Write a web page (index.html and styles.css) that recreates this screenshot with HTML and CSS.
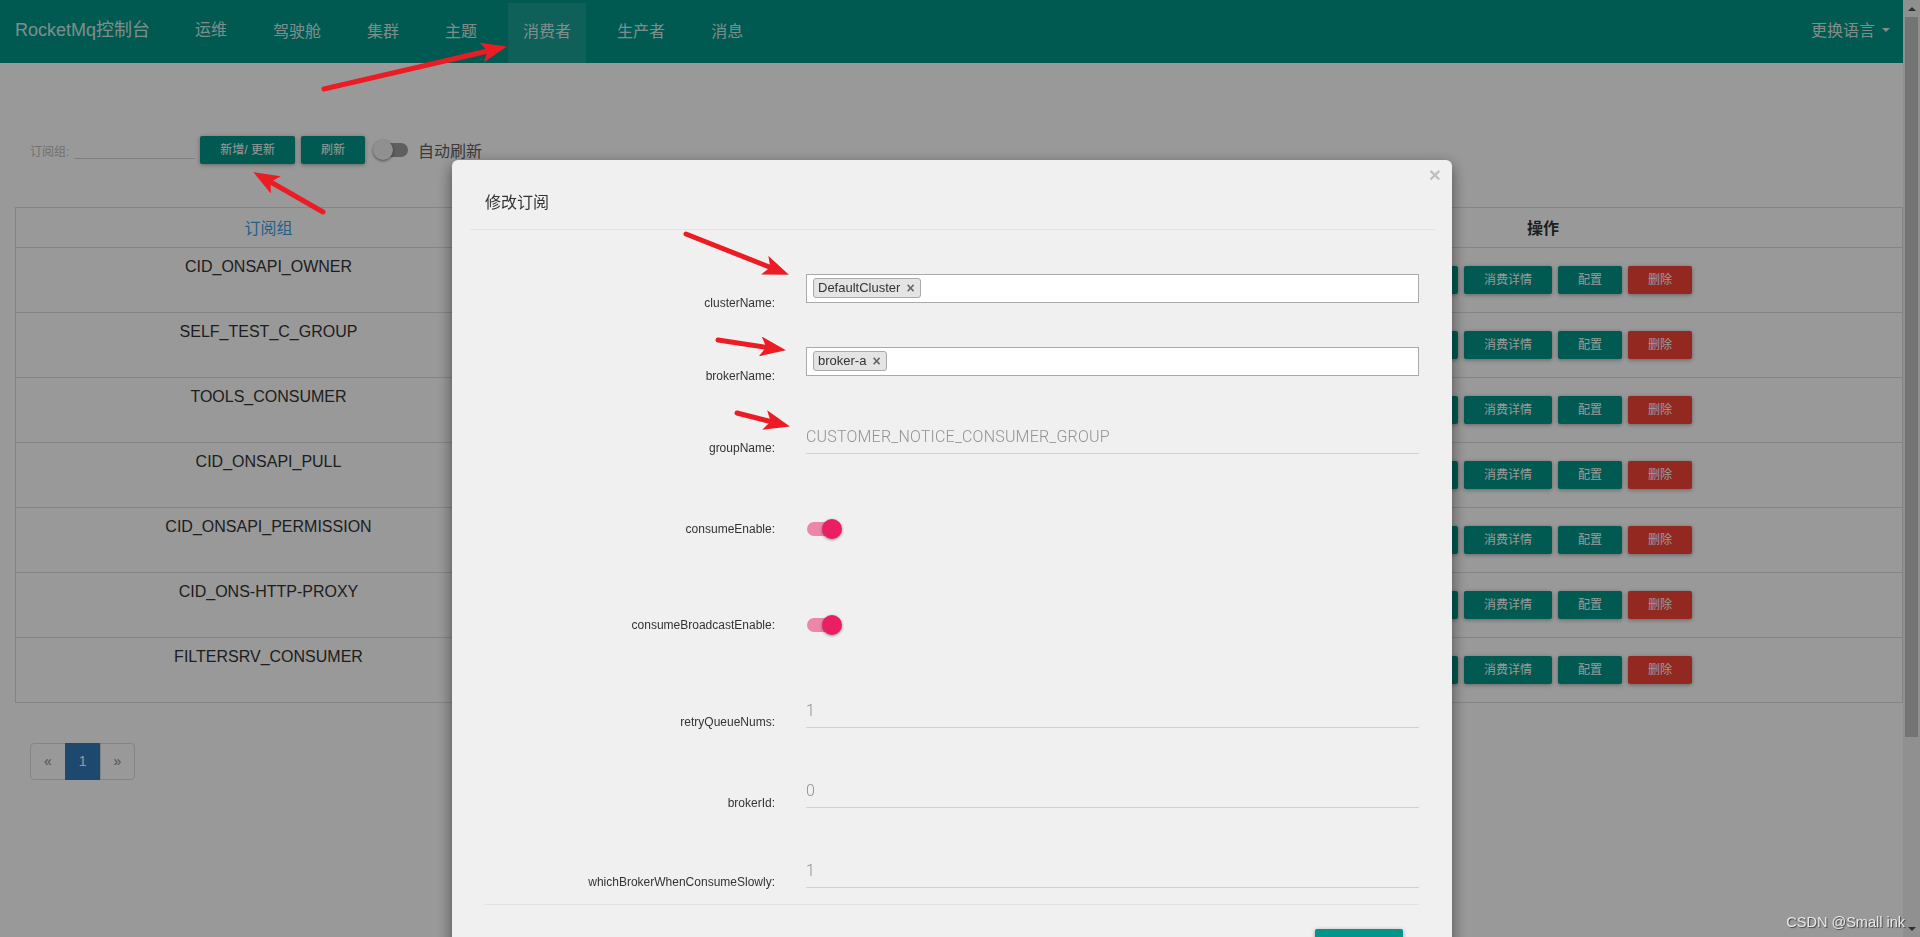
FILE: index.html
```html
<!DOCTYPE html>
<html lang="zh">
<head>
<meta charset="utf-8">
<title>RocketMq控制台</title>
<link rel="stylesheet" href="styles.css">
</head>
<body>
<div class="page">
  <div class="app">
    <nav class="navbar">
      <div class="brand">RocketMq控制台</div>
      <ul class="nav-list">
        <li class="nav-item nav-item-up">运维</li>
        <li class="nav-item">驾驶舱</li>
        <li class="nav-item">集群</li>
        <li class="nav-item">主题</li>
        <li class="nav-item active">消费者</li>
        <li class="nav-item">生产者</li>
        <li class="nav-item">消息</li>
      </ul>
      <div class="lang">更换语言<span class="caret"></span></div>
    </nav>
    <main class="content">
      <div class="filter">
        <span class="filter-label">订阅组:</span>
        <span class="filter-input"></span>
        <span class="btn btn-gap">新增/ 更新</span>
        <span class="btn btn-gap">刷新</span>
        <span class="switch"><span class="switch-track"></span><span class="switch-knob"></span></span>
        <span class="auto-label">自动刷新</span>
      </div>
      <div class="grid-table">
        <div class="tr thead">
          <div class="th th-link">订阅组</div>
          <div class="th">数量</div>
          <div class="th">版本</div>
          <div class="th">类型</div>
          <div class="th">模式</div>
          <div class="th">TPS</div>
          <div class="th">延迟</div>
          <div class="th th-bold">操作</div>
        </div>
        <div class="tr trow">
          <div class="td">CID_ONSAPI_OWNER</div><div class="td">0</div><div class="td"></div><div class="td"></div><div class="td"></div><div class="td">0</div><div class="td">0</div>
          <div class="td td-ops"><span class="btn">终端</span><span class="btn">消费详情</span><span class="btn">配置</span><span class="btn btn-red">删除</span></div>
        </div>
        <div class="tr trow">
          <div class="td">SELF_TEST_C_GROUP</div><div class="td">0</div><div class="td"></div><div class="td"></div><div class="td"></div><div class="td">0</div><div class="td">0</div>
          <div class="td td-ops"><span class="btn">终端</span><span class="btn">消费详情</span><span class="btn">配置</span><span class="btn btn-red">删除</span></div>
        </div>
        <div class="tr trow">
          <div class="td">TOOLS_CONSUMER</div><div class="td">0</div><div class="td"></div><div class="td"></div><div class="td"></div><div class="td">0</div><div class="td">0</div>
          <div class="td td-ops"><span class="btn">终端</span><span class="btn">消费详情</span><span class="btn">配置</span><span class="btn btn-red">删除</span></div>
        </div>
        <div class="tr trow">
          <div class="td">CID_ONSAPI_PULL</div><div class="td">0</div><div class="td"></div><div class="td"></div><div class="td"></div><div class="td">0</div><div class="td">0</div>
          <div class="td td-ops"><span class="btn">终端</span><span class="btn">消费详情</span><span class="btn">配置</span><span class="btn btn-red">删除</span></div>
        </div>
        <div class="tr trow">
          <div class="td">CID_ONSAPI_PERMISSION</div><div class="td">0</div><div class="td"></div><div class="td"></div><div class="td"></div><div class="td">0</div><div class="td">0</div>
          <div class="td td-ops"><span class="btn">终端</span><span class="btn">消费详情</span><span class="btn">配置</span><span class="btn btn-red">删除</span></div>
        </div>
        <div class="tr trow">
          <div class="td">CID_ONS-HTTP-PROXY</div><div class="td">0</div><div class="td"></div><div class="td"></div><div class="td"></div><div class="td">0</div><div class="td">0</div>
          <div class="td td-ops"><span class="btn">终端</span><span class="btn">消费详情</span><span class="btn">配置</span><span class="btn btn-red">删除</span></div>
        </div>
        <div class="tr trow">
          <div class="td">FILTERSRV_CONSUMER</div><div class="td">0</div><div class="td"></div><div class="td"></div><div class="td"></div><div class="td">0</div><div class="td">0</div>
          <div class="td td-ops"><span class="btn">终端</span><span class="btn">消费详情</span><span class="btn">配置</span><span class="btn btn-red">删除</span></div>
        </div>
      </div>
      <ul class="pagination">
        <li class="pg">«</li>
        <li class="pg pg-active">1</li>
        <li class="pg">»</li>
      </ul>
    </main>
  </div>
  <div class="scrollbar">
    <span class="sb-up"></span>
    <span class="sb-thumb"></span>
    <span class="sb-fill"></span>
    <span class="sb-down"></span>
  </div>
</div>

<div class="backdrop"></div>

<div class="modal">
  <span class="close">×</span>
  <div class="modal-header">
    <h4 class="modal-title">修改订阅</h4>
  </div>
  <div class="modal-body">
    <div class="form-row">
      <label class="form-label lb-box">clusterName:</label>
      <div class="control tagbox"><span class="tag">DefaultCluster<span class="tag-x">×</span></span></div>
    </div>
    <div class="form-row">
      <label class="form-label lb-box">brokerName:</label>
      <div class="control tagbox"><span class="tag">broker-a<span class="tag-x">×</span></span></div>
    </div>
    <div class="form-row">
      <label class="form-label lb-field">groupName:</label>
      <div class="control field">CUSTOMER_NOTICE_CONSUMER_GROUP</div>
    </div>
    <div class="form-row row-toggle row-ce">
      <label class="form-label">consumeEnable:</label>
      <div class="control"><span class="mswitch"><span class="mswitch-track"></span><span class="mswitch-knob"></span></span></div>
    </div>
    <div class="form-row row-toggle row-cbe">
      <label class="form-label">consumeBroadcastEnable:</label>
      <div class="control"><span class="mswitch"><span class="mswitch-track"></span><span class="mswitch-knob"></span></span></div>
    </div>
    <div class="form-row row-retry">
      <label class="form-label lb-field">retryQueueNums:</label>
      <div class="control field">1</div>
    </div>
    <div class="form-row row-num">
      <label class="form-label lb-field2">brokerId:</label>
      <div class="control field">0</div>
    </div>
    <div class="form-row row-num">
      <label class="form-label lb-field">whichBrokerWhenConsumeSlowly:</label>
      <div class="control field">1</div>
    </div>
  </div>
  <div class="modal-line"></div>
  <div class="modal-footer"><span class="btn btn-submit"></span></div>
</div>

<svg class="annotations" width="1920" height="937" viewBox="0 0 1920 937">
  <defs>
    <marker id="ah" markerWidth="26" markerHeight="20" refX="14" refY="10" orient="auto" markerUnits="userSpaceOnUse">
      <path d="M0,0 L26,10 L0,20 L6,10 Z" fill="#ec1c24"/>
    </marker>
  </defs>
  <g stroke="#ec1c24" stroke-width="5" stroke-linecap="round" fill="none">
    <line x1="324" y1="89" x2="495.3" y2="49.3" marker-end="url(#ah)"/>
    <line x1="323" y1="212" x2="263.7" y2="178" marker-end="url(#ah)"/>
    <line x1="686" y1="234" x2="777.7" y2="270.3" marker-end="url(#ah)"/>
    <line x1="718" y1="340" x2="774.1" y2="348.5" marker-end="url(#ah)"/>
    <line x1="737" y1="413" x2="778.3" y2="423.5" marker-end="url(#ah)"/>
  </g>
</svg>

<div class="watermark">CSDN @Small ink</div>
</body>
</html>
```

FILE: styles.css
```css
* { box-sizing: border-box; }

html, body {
  margin: 0;
  height: 937px;
  overflow: hidden;
}

body {
  font-family: "Liberation Sans", "Noto Sans CJK SC", sans-serif;
  background: #fff;
  color: #333;
}

.page {
  display: flex;
  height: 937px;
}

.app {
  flex: 1;
  min-width: 0;
}

/* navbar */
.navbar {
  display: flex;
  height: 63px;
  background: #009688;
  color: rgba(255, 255, 255, .84);
}

.brand {
  padding: 0 15px;
  font-size: 18px;
  line-height: 60px;
}

.nav-list {
  display: flex;
  gap: 16px;
  margin: 0 0 0 15px;
  padding: 0;
  list-style: none;
}

.nav-item {
  padding: 0 15px;
  font-size: 16px;
  line-height: 64px;
}

.nav-item-up { line-height: 60px; }

.nav-item.active {
  margin-top: 3px;
  line-height: 58px;
  height: 60px;
  background: rgba(255, 255, 255, .1);
}

.lang {
  display: flex;
  align-items: center;
  margin-left: auto;
  padding: 0 13px 0 15px;
  font-size: 16px;
  height: 58px;
}

.caret {
  width: 0;
  height: 0;
  margin-left: 7px;
  margin-top: 2px;
  border-left: 4px solid transparent;
  border-right: 4px solid transparent;
  border-top: 4px solid rgba(255, 255, 255, .84);
}

/* content */
.content {
  padding: 73px 0 0 15px;
}

.filter {
  display: flex;
  align-items: center;
  height: 28px;
  padding-left: 15px;
}

.filter-label {
  font-size: 12px;
  color: #bdbdbd;
  margin-right: 5px;
}

.filter-input {
  width: 121px;
  height: 17px;
  margin-right: 5px;
  border-bottom: 1px solid #d2d2d2;
}

.btn {
  display: inline-block;
  height: 28px;
  line-height: 28px;
  padding: 0 20px;
  font-size: 12px;
  color: #fff;
  background: #009688;
  border-radius: 2px;
  box-shadow: 0 1px 4px rgba(0, 0, 0, .35);
  white-space: nowrap;
}

.btn-gap { margin-right: 6px; }

.btn-red { background: #f44336; }

.switch {
  display: grid;
  width: 35px;
  height: 20px;
  margin-left: 2px;
}

.switch-track {
  grid-area: 1 / 1;
  align-self: center;
  margin-left: 5px;
  width: 30px;
  height: 14px;
  border-radius: 7px;
  background: #9e9e9e;
}

.switch-knob {
  grid-area: 1 / 1;
  width: 20px;
  height: 20px;
  border-radius: 50%;
  background: #f1f1f1;
  box-shadow: 0 1px 3px rgba(0, 0, 0, .5);
}

.auto-label {
  margin-left: 10px;
  font-size: 16px;
  color: #616161;
}

/* table */
.grid-table {
  margin-top: 43px;
  border: 1px solid #ddd;
}

.tr {
  display: grid;
  grid-template-columns: 505px repeat(6, 1fr) 718px;
}

.thead {
  height: 39px;
  align-items: center;
  text-align: center;
  font-size: 16px;
  padding-bottom: 2px;
}

.th-link { color: #3aa0e6; }

.th-bold { font-weight: bold; color: #333; }

.trow {
  height: 65px;
  border-top: 1px solid #ddd;
}

.td {
  padding-top: 8px;
  text-align: center;
  font-size: 16px;
  line-height: 22px;
  color: #333;
}

.td-ops {
  display: flex;
  justify-content: center;
  gap: 6px;
  padding-top: 18px;
}

/* pagination */
.pagination {
  display: flex;
  list-style: none;
  padding: 0;
  margin: 40px 0 0 15px;
}

.pg {
  height: 37px;
  line-height: 35px;
  padding: 0 13px;
  margin-left: -1px;
  border: 1px solid #ddd;
  font-size: 14px;
  color: #888;
  background: #fff;
}

.pg:first-child {
  margin-left: 0;
  border-radius: 4px 0 0 4px;
}

.pg:last-child { border-radius: 0 4px 4px 0; }

.pg-active {
  background: #337ab7;
  border-color: #337ab7;
  color: #fff;
}

/* fake scrollbar */
.scrollbar {
  display: flex;
  flex-direction: column;
  align-items: center;
  width: 17px;
  background: #f1f1f1;
}

.sb-up, .sb-down {
  display: flex;
  align-items: center;
  justify-content: center;
  width: 17px;
  height: 17px;
}

.sb-up::before {
  content: "";
  border-left: 4px solid transparent;
  border-right: 4px solid transparent;
  border-bottom: 4px solid #505050;
}

.sb-down::before {
  content: "";
  border-left: 4px solid transparent;
  border-right: 4px solid transparent;
  border-top: 4px solid #505050;
}

.sb-thumb {
  width: 13px;
  height: 720px;
  background: #c1c1c1;
}

.sb-fill { flex: 1; }

/* overlay */
.backdrop {
  position: fixed;
  inset: 0;
  background: rgba(0, 0, 0, .4);
}

.modal {
  position: fixed;
  top: 160px;
  left: 452px;
  width: 1000px;
  padding: 17px 17px 0 18px;
  background: #f0f0f0;
  border-radius: 6px;
  box-shadow: 0 5px 15px rgba(0, 0, 0, .5);
}

.close {
  position: absolute;
  top: 4px;
  right: 11px;
  font-size: 21px;
  line-height: 21px;
  font-weight: bold;
  color: #000;
  opacity: .2;
}

.modal-header {
  padding: 15px;
  border-bottom: 1px solid #e3e3e3;
}

.modal-title {
  margin: 0;
  font-size: 16px;
  line-height: 22px;
  font-weight: normal;
  color: #333;
}

.modal-body {
  padding-bottom: 16px;
}

.form-row {
  display: flex;
  align-items: flex-end;
  margin-top: 44px;
}

.form-label {
  width: 305px;
  margin-right: 31px;
  text-align: right;
  font-size: 12px;
  line-height: 14px;
  color: #333;
}

.lb-box { margin-bottom: -7px; }
.lb-field { margin-bottom: -1px; }
.lb-field2 { margin-bottom: -2px; }

.control { width: 613px; }

.tagbox {
  display: flex;
  align-items: flex-start;
  height: 29px;
  padding: 3px 6px;
  border: 1px solid #aaa;
  background: #fff;
}

.tag {
  display: flex;
  height: 20px;
  line-height: 18px;
  padding: 0 5px 0 4px;
  border: 1px solid #aaa;
  border-radius: 3px;
  background: #e4e4e4;
  font-size: 13px;
  color: #333;
}

.tag-x {
  margin-left: 6px;
  font-size: 14px;
  font-weight: bold;
  color: #666;
}

.field {
  height: 34px;
  line-height: 33px;
  border-bottom: 1px solid #d2d2d2;
  font-family: Roboto, "Liberation Sans", sans-serif;
  font-size: 16px;
  font-weight: 300;
  letter-spacing: .2px;
  color: #929292;
}

.row-toggle { align-items: center; }
.row-ce { margin-top: 65px; }
.row-cbe { margin-top: 76px; }
.row-retry { margin-top: 59px; }
.row-num { margin-top: 46px; }

.mswitch {
  display: grid;
  width: 36px;
  height: 20px;
}

.mswitch-track {
  grid-area: 1 / 1;
  align-self: center;
  margin-left: 1px;
  width: 30px;
  height: 14px;
  border-radius: 7px;
  background: #ec87aa;
}

.mswitch-knob {
  grid-area: 1 / 1;
  margin-left: 16px;
  width: 20px;
  height: 20px;
  border-radius: 50%;
  background: #e91e63;
  box-shadow: 0 1px 3px rgba(0, 0, 0, .4);
}

.modal-line {
  margin: 0 16px 0 14px;
  border-top: 1px solid #e3e3e3;
}

.modal-footer {
  display: flex;
  justify-content: flex-end;
  padding: 24px 32px 20px 0;
}

.btn-submit {
  width: 88px;
  height: 36px;
}

/* annotations */
.annotations {
  position: fixed;
  top: 0;
  left: 0;
  pointer-events: none;
}

.watermark {
  position: fixed;
  right: 15px;
  bottom: 7px;
  font-size: 14.5px;
  line-height: 16px;
  color: #e8e8e8;
  text-shadow: 1px 1px 1px rgba(0, 0, 0, .55);
}
```
